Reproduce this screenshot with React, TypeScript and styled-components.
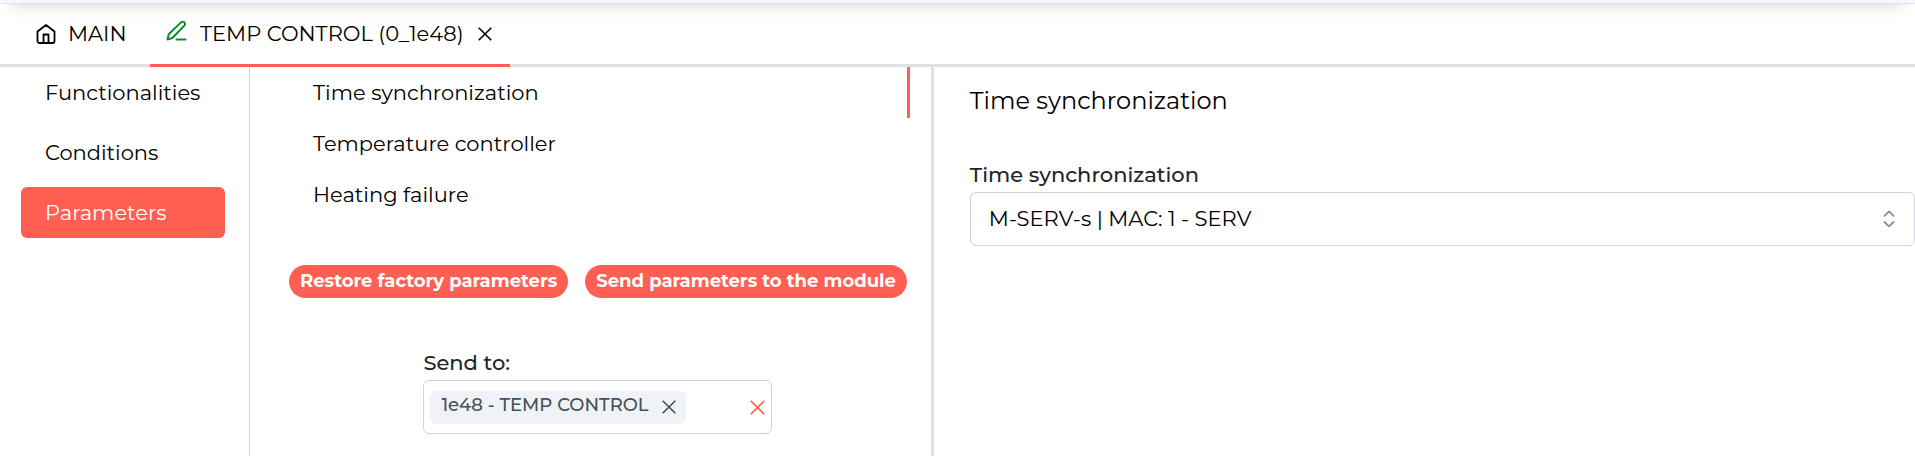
import React, { useState } from "react";
import styled, { createGlobalStyle } from "styled-components";

const accent = "#ff5f52";
const line = "#dee2e6";
const fieldLine = "#ced4da";

const GlobalStyle = createGlobalStyle`
  *, *::before, *::after { box-sizing: border-box; }
  body {
    margin: 0;
    background: #fff;
    color: #000;
    font-family: Montserrat, Inter, sans-serif;
    font-size: 21px;
    font-weight: 400;
    line-height: 30px;
  }
  button, input, select { font: inherit; color: inherit; }
  svg { display: block; flex: none; }
`;

const Page = styled.div`
  min-height: 100vh;
  display: flex;
  flex-direction: column;
`;

const TopEdge = styled.div`
  height: 4px;
  background: #f4f8fe;
  border-bottom: 1px solid #e3e6ea;
`;

const TabBar = styled.nav`
  display: flex;
  height: 63px;
  box-shadow: inset 0 -3px ${line};
  background:
    linear-gradient(to right, #fff, transparent 24px, transparent calc(100% - 24px), #fff),
    linear-gradient(#e6e6e6, #f5f5f5 6px, #fff 15px);
`;

const Tab = styled.div<{ $active?: boolean }>`
  display: flex;
  align-items: center;
  gap: 12px;
  padding: ${(p) => (p.$active ? "0 18px 0 16px" : "0 24px 0 36px")};
  width: ${(p) => (p.$active ? "360px" : "150px")};
  border-bottom: 3px solid ${(p) => (p.$active ? accent : "transparent")};
  white-space: nowrap;
`;

const TabButton = styled.button`
  display: flex;
  align-items: center;
  flex: 1;
  gap: 12px;
  padding: 0;
  border: 0;
  background: none;
  cursor: pointer;
`;

const IconButton = styled.button<{ $color?: string }>`
  padding: 0;
  border: 0;
  background: none;
  color: ${(p) => p.$color ?? "#000"};
  cursor: pointer;
`;

const Body = styled.div`
  flex: 1;
  display: grid;
  grid-template-columns: 250px minmax(0, 23fr) minmax(0, 33fr);
`;

const Sidebar = styled.nav`
  display: flex;
  flex-direction: column;
  gap: 9px;
  padding: 0 24px 24px 21px;
  border-right: 1px solid ${fieldLine};
`;

const SideItem = styled.button<{ $active?: boolean }>`
  height: 51px;
  padding: 0 24px;
  border: 0;
  border-radius: 6px;
  text-align: left;
  cursor: pointer;
  background: ${(p) => (p.$active ? accent : "transparent")};
  color: ${(p) => (p.$active ? "#fff" : "#000")};
`;

const Middle = styled.section`
  padding: 0 21px 21px 39px;
  border-right: 3px solid ${line};
`;

const ParamItem = styled.button<{ $active?: boolean }>`
  display: block;
  width: 100%;
  height: 51px;
  padding: 0 24px;
  border: 0;
  border-right: 3px solid ${(p) => (p.$active ? accent : "transparent")};
  background: none;
  text-align: left;
  cursor: pointer;
`;

const SendArea = styled.div`
  margin: 45px 3px 0 0;
`;

const Actions = styled.div`
  display: flex;
  justify-content: space-between;
  gap: 12px;
`;

const Pill = styled.button`
  height: 33px;
  padding: 0 11px;
  border: 0;
  border-radius: 17px;
  background: ${accent};
  color: #fff;
  font-size: 18px;
  font-weight: 700;
  line-height: 33px;
  white-space: nowrap;
  cursor: pointer;
`;

const Field = styled.div<{ $narrow?: boolean }>`
  display: flex;
  flex-direction: column;
  gap: 2px;
  width: ${(p) => (p.$narrow ? "349px" : "100%")};
  margin: ${(p) => (p.$narrow ? "50px auto 0" : "44px 0 0")};
`;

const Label = styled.label`
  color: #212529;
  font-weight: 500;
`;

const TagsBox = styled.div`
  display: flex;
  align-items: center;
  height: 54px;
  padding: 0 6px;
  border: 1px solid ${fieldLine};
  border-radius: 6px;
`;

const Tag = styled.span`
  display: flex;
  align-items: center;
  justify-content: space-between;
  flex: none;
  width: 256px;
  height: 33px;
  padding: 0 10px 0 11px;
  border-radius: 6px;
  background: #eff2f6;
  color: #495057;
  font-size: 18px;
  font-weight: 500;
  white-space: nowrap;
`;

const TagText = styled.span`
  padding-bottom: 4px;
`;

const TagsInput = styled.input`
  flex: 1;
  min-width: 0;
  padding: 0;
  border: 0;
  outline: 0;
  background: none;
`;

const Details = styled.section`
  padding: 18px 0 21px 36px;
`;

const Title = styled.h1`
  margin: 0;
  font-size: 24px;
  font-weight: 400;
  line-height: 31px;
`;

const SelectWrap = styled.div`
  position: relative;
`;

const Select = styled.select`
  display: block;
  width: 100%;
  height: 54px;
  padding: 0 48px 0 18px;
  border: 1px solid ${fieldLine};
  border-radius: 6px;
  background: #fff;
  appearance: none;
`;

const SelectMark = styled.span`
  position: absolute;
  top: 18px;
  right: 20px;
  color: #868e96;
  pointer-events: none;
`;

const Cross = ({ size }: { size: number }) => (
  <svg width={size} height={size} viewBox="0 0 14 14" fill="none" stroke="currentColor" strokeWidth="1.6">
    <path d="M.7.7l12.600 12.600M13.300.7L.7 13.300" />
  </svg>
);

const HomeIcon = () => (
  <svg width="20" height="20" viewBox="0 0 20 20" fill="none" stroke="currentColor" strokeWidth="1.8" strokeLinejoin="round">
    <path d="M1.500 7.500L10 1l8.500 6.500V17a2 2 0 0 1-2 2h-13a2 2 0 0 1-2-2zM7.500 19v-8.500h5V19" />
  </svg>
);

const PenIcon = () => (
  <svg width="22" height="26" viewBox="0 0 22 26" fill="none" stroke="#0a8a24" strokeWidth="1.9" strokeLinecap="round" strokeLinejoin="round">
    <path d="M1.500 18.500l1.200-5.200L15 1.400a2.300 2.300 0 0 1 3.300 3.300L6.400 17zM10.500 18.500h9" />
  </svg>
);

const SortIcon = () => (
  <svg width="12" height="18" viewBox="0 0 12 18" fill="none" stroke="currentColor" strokeWidth="1.8" strokeLinecap="round" strokeLinejoin="round">
    <path d="M1.500 5.800L6 1.400l4.500 4.400M1.500 12L6 16.400 10.500 12" />
  </svg>
);

const sections = ["Functionalities", "Conditions", "Parameters"];
const params = ["Time synchronization", "Temperature controller", "Heating failure"];

export default function App() {
  const [section, setSection] = useState("Parameters");
  const [param, setParam] = useState(params[0]);

  return (
    <Page>
      <GlobalStyle />
      <TopEdge />
      <TabBar>
        <Tab>
          <TabButton>
            <HomeIcon />
            MAIN
          </TabButton>
        </Tab>
        <Tab $active>
          <TabButton>
            <PenIcon />
            TEMP CONTROL (0_1e48)
          </TabButton>
          <IconButton aria-label="Close tab">
            <Cross size={14} />
          </IconButton>
        </Tab>
      </TabBar>
      <Body>
        <Sidebar>
          {sections.map((name) => (
            <SideItem key={name} $active={name === section} onClick={() => setSection(name)}>
              {name}
            </SideItem>
          ))}
        </Sidebar>
        <Middle>
          {params.map((name) => (
            <ParamItem key={name} $active={name === param} onClick={() => setParam(name)}>
              {name}
            </ParamItem>
          ))}
          <SendArea>
            <Actions>
              <Pill>Restore factory parameters</Pill>
              <Pill>Send parameters to the module</Pill>
            </Actions>
            <Field $narrow>
              <Label htmlFor="send-to">Send to:</Label>
              <TagsBox>
                <Tag>
                  <TagText>1e48 - TEMP CONTROL</TagText>
                  <IconButton $color="#495057" aria-label="Remove 1e48 - TEMP CONTROL">
                    <Cross size={14} />
                  </IconButton>
                </Tag>
                <TagsInput id="send-to" />
                <IconButton $color={accent} aria-label="Clear all">
                  <Cross size={15} />
                </IconButton>
              </TagsBox>
            </Field>
          </SendArea>
        </Middle>
        <Details>
          <Title>{param}</Title>
          <Field>
            <Label htmlFor="time-source">Time synchronization</Label>
            <SelectWrap>
              <Select id="time-source">
                <option>M-SERV-s | MAC: 1 - SERV</option>
              </Select>
              <SelectMark>
                <SortIcon />
              </SelectMark>
            </SelectWrap>
          </Field>
        </Details>
      </Body>
    </Page>
  );
}
